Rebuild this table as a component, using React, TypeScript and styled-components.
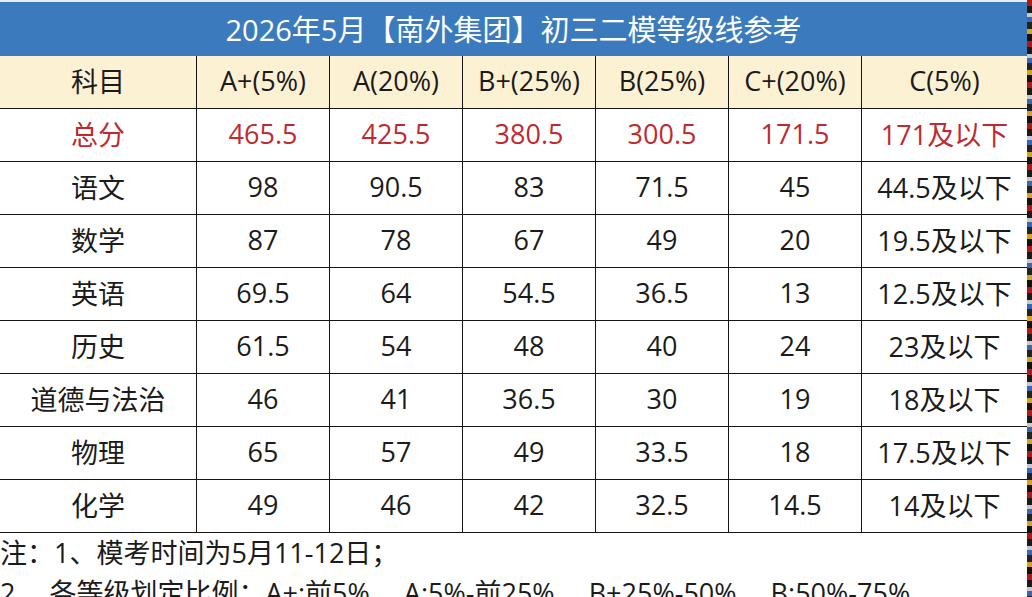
import React from "react";
import styled, { createGlobalStyle } from "styled-components";

const GlobalStyle = createGlobalStyle`
  html, body {
    margin: 0;
    padding: 0;
    background: #ffffff;
    overflow: hidden;
  }
  body {
    font-family: "Open Sans", "Noto Sans CJK SC", sans-serif;
  }
`;

const Page = styled.div`
  display: flex;
  width: 1032px;
  height: 597px;
  overflow: hidden;
`;

const Main = styled.div`
  width: 1027px;
  flex-shrink: 0;
  display: flex;
  flex-direction: column;
  & > * {
    flex-shrink: 0;
  }
`;

const Strip = styled.div`
  width: 5px;
  flex-shrink: 0;
  background: repeating-linear-gradient(
    180deg,
    #b01818 0px,
    #b01818 6px,
    #1a1a1a 6px,
    #1a1a1a 13px,
    #c8c8c8 13px,
    #c8c8c8 17px,
    #3a66b8 17px,
    #3a66b8 22px,
    #222 22px,
    #222 29px,
    #d9a21c 29px,
    #d9a21c 34px,
    #111 34px,
    #111 41px
  );
`;

const TitleBar = styled.div`
  height: 52px;
  border-top: 2px solid #e6edf4;
  background: #3b7bbd;
  color: #ffffff;
  font-size: 29px;
  display: flex;
  align-items: center;
  justify-content: center;
  padding-bottom: 2px;
  box-sizing: content-box;
`;

const Grid = styled.div`
  display: grid;
  grid-template-columns: 197px 133px 133px 133px 133px 133px 165px;
  grid-auto-rows: 53px;
`;

const Cell = styled.div<{ $head?: boolean; $red?: boolean; $last?: boolean }>`
  display: flex;
  align-items: center;
  justify-content: center;
  box-sizing: border-box;
  padding-bottom: 3px;
  border-bottom: 1px solid #151515;
  border-right: ${(p) => (p.$last ? "none" : "1px solid #151515")};
  background: ${(p) => (p.$head ? "#fdf1d4" : "#ffffff")};
  color: ${(p) => (p.$red ? "#bf2a30" : "#1b1b1b")};
  font-size: 27px;
  white-space: nowrap;
`;

const Notes = styled.div`
  display: flex;
  flex-direction: column;
  font-size: 27px;
  color: #1b1b1b;
  white-space: nowrap;
`;

const NoteLine = styled.div`
  height: 40px;
  line-height: 40px;
`;

const headers = ["科目", "A+(5%)", "A(20%)", "B+(25%)", "B(25%)", "C+(20%)", "C(5%)"];

const rows: string[][] = [
  ["总分", "465.5", "425.5", "380.5", "300.5", "171.5", "171及以下"],
  ["语文", "98", "90.5", "83", "71.5", "45", "44.5及以下"],
  ["数学", "87", "78", "67", "49", "20", "19.5及以下"],
  ["英语", "69.5", "64", "54.5", "36.5", "13", "12.5及以下"],
  ["历史", "61.5", "54", "48", "40", "24", "23及以下"],
  ["道德与法治", "46", "41", "36.5", "30", "19", "18及以下"],
  ["物理", "65", "57", "49", "33.5", "18", "17.5及以下"],
  ["化学", "49", "46", "42", "32.5", "14.5", "14及以下"],
];

export default function App() {
  return (
    <>
      <GlobalStyle />
      <Page>
        <Main>
          <TitleBar>2026年5月【南外集团】初三二模等级线参考</TitleBar>
          <Grid>
            {headers.map((h, i) => (
              <Cell key={h} $head $last={i === headers.length - 1}>
                {h}
              </Cell>
            ))}
            {rows.map((r, ri) =>
              r.map((v, ci) => (
                <Cell key={`${ri}-${ci}`} $red={ri === 0} $last={ci === r.length - 1}>
                  {v}
                </Cell>
              ))
            )}
          </Grid>
          <Notes>
            <NoteLine>注：1、模考时间为5月11-12日；</NoteLine>
            <NoteLine>2、 各等级划定比例：A+:前5%、 A:5%-前25%、 B+25%-50%、 B:50%-75%</NoteLine>
          </Notes>
        </Main>
        <Strip />
      </Page>
    </>
  );
}
